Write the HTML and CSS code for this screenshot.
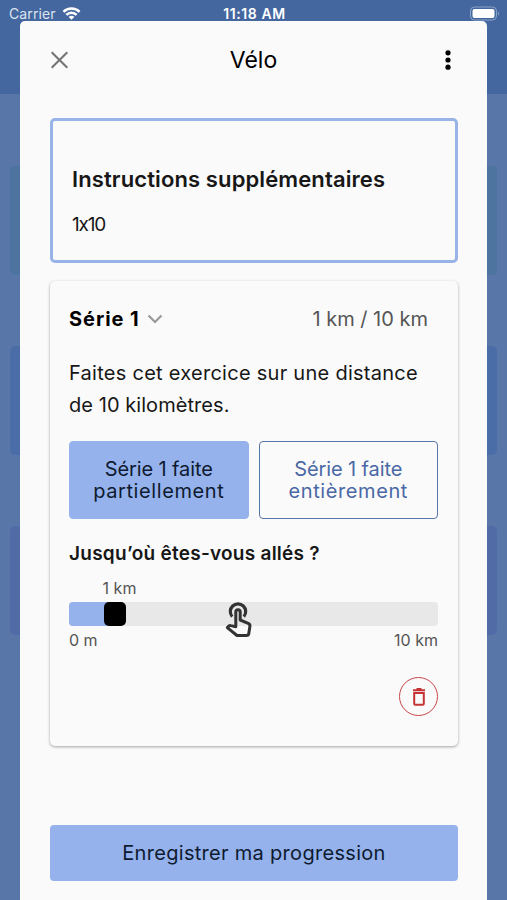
FILE: index.html
```html
<!DOCTYPE html>
<html lang="fr">
<head>
    <meta charset="UTF-8">
    <meta name="viewport" content="width=device-width, initial-scale=1.0">
    <title>Vélo</title>
    <link rel="stylesheet" href="styles.css">
</head>
<body>

<div class="app-background">
    <div class="app-bar"></div>
    <div class="app-list">
        <div class="app-item teal"></div>
        <div class="app-item blue"></div>
        <div class="app-item indigo"></div>
    </div>
</div>

<div class="status-bar">
    <div class="carrier">
        <span>Carrier</span>
        <svg width="19" height="15" viewBox="0 0 20 15" fill="none" stroke="#fff" stroke-width="2.7">
            <path d="M1.5 5.7a12 12 0 0 1 17 0"/>
            <path d="M4.6 9a7.6 7.6 0 0 1 10.8 0"/>
            <path d="M10 14.2l-3-3a4.2 4.2 0 0 1 6 0z" fill="#fff" stroke="none"/>
        </svg>
    </div>
    <span class="time">11:18 AM</span>
    <svg class="battery" width="31" height="15" viewBox="0 0 31 15">
        <rect x="1.5" y="1" width="26" height="13" rx="4" fill="none" stroke="#8ba4c9"/>
        <rect x="3.5" y="3" width="22" height="9" rx="2" fill="#fff"/>
        <path d="M29 5.2q2 2.3 0 4.6z" fill="#8ba4c9"/>
    </svg>
</div>

<main class="modal">
    <header class="modal-header">
        <svg width="19" height="20" viewBox="0 0 19 20" fill="none" stroke="#757575" stroke-width="2.1">
            <path d="M1.7 2.2l15.6 15.6M17.3 2.2L1.7 17.8"/>
        </svg>
        <h1>Vélo</h1>
        <svg width="20" height="20" viewBox="0 0 20 20">
            <circle cx="10" cy="2.8" r="2.6"/>
            <circle cx="10" cy="10" r="2.6"/>
            <circle cx="10" cy="17.2" r="2.6"/>
        </svg>
    </header>

    <section class="instructions">
        <h2>Instructions supplémentaires</h2>
        <p>1x10</p>
    </section>

    <section class="serie">
        <div class="serie-header">
            <h3>Série 1</h3>
            <svg width="16" height="10" viewBox="0 0 16 10" fill="none" stroke="#999" stroke-width="2.2">
                <path d="M1.5 1.5L8 8l6.5-6.5"/>
            </svg>
            <span class="distance">1 km / 10 km</span>
        </div>
        <p class="description"><span class="line-one">Faites cet exercice sur une distance</span><br>de 10 kilomètres.</p>
        <div class="choices">
            <button class="choice selected"><span class="line-one">Série 1 faite</span><br>partiellement</button>
            <button class="choice"><span class="line-one">Série 1 faite</span><br>entièrement</button>
        </div>
        <h4>Jusqu’où êtes-vous allés ?</h4>
        <div class="slider">
            <div class="slider-value">1 km</div>
            <div class="track">
                <div class="fill"></div>
                <div class="thumb"></div>
                <svg class="hand" width="28" height="36" viewBox="0 0 28 36" fill="none" stroke="#333" stroke-width="3" stroke-linejoin="round">
                    <path d="M7.2 14.6A7.7 7.7 0 1 1 18.8 14.6" stroke-width="3.2"/>
                    <path d="M10.8 10a2.2 2.2 0 0 1 4.4 0v8l8 3.3q2 .9 1.7 3l-1.1 7.2q-.3 2-2.4 2H12L2.3 25.6l1.5-1.5q.8-.8 2-.5l5 1.1z"/>
                </svg>
            </div>
            <div class="slider-limits"><span>0 m</span><span>10 km</span></div>
        </div>
        <button class="delete" aria-label="Supprimer">
            <svg width="14" height="18" viewBox="0 0 14 18" fill="none" stroke="#c53336" stroke-width="2">
                <path d="M1 2.3h12M4.5 1h5"/>
                <path d="M2.2 5h9.6v10.8q0 1-1 1H3.2q-1 0-1-1z"/>
            </svg>
        </button>
    </section>

    <button class="save">Enregistrer ma progression</button>
</main>

</body>
</html>
```
FILE: styles.css
```css
* {
    box-sizing: border-box;
}

body {
    position: relative;
    height: 900px;
    margin: 0;
    overflow: hidden;
    font-family: Inter, "Liberation Sans", sans-serif;
    color: #171717;
    background-color: #5976a9;
}

h1, h2, h3, h4, p {
    margin: 0;
}

button {
    font-family: inherit;
    padding: 0;
    border: none;
    border-radius: 4px;
    cursor: pointer;
}

.app-bar {
    height: 94px;
    background-color: #44679f;
}

.app-list {
    display: flex;
    flex-direction: column;
    gap: 71px;
    padding: 72px 10px 0;
}

.app-item {
    height: 109px;
    border-radius: 5px;
}

.app-item.teal {
    background-color: #4d739f;
}

.app-item.blue {
    background-color: #4a6da7;
}

.app-item.indigo {
    background-color: #506ba5;
}

/* Barre de statut */
.status-bar {
    position: absolute;
    top: 0;
    left: 0;
    display: grid;
    grid-template-columns: 1fr auto 1fr;
    width: 100%;
    height: 27px;
    padding: 0 7px 0 9px;
    align-items: center;
    color: white;
    font-size: 14px;
}

.carrier {
    display: flex;
    align-items: center;
    gap: 6px;
    color: #dce4f0;
    letter-spacing: 0.1px;
}

.time {
    font-size: 14px;
    font-weight: 600;
    letter-spacing: 0.6px;
}

.battery {
    justify-self: end;
}

/* Fenêtre */
.modal {
    position: absolute;
    top: 21px;
    left: 20px;
    width: 467px;
    height: 879px;
    padding: 0 29px 0 30px;
    border-radius: 5px 5px 0 0;
    background-color: #fafafa;
}

.modal-header {
    display: flex;
    justify-content: space-between;
    align-items: center;
    height: 77px;
}

.modal-header h1 {
    font-size: 23px;
    font-weight: 400;
    color: #000;
}

.instructions {
    height: 145px;
    margin-top: 20px;
    padding: 44px 19px 0;
    border: 3px solid #98b3e8;
    border-radius: 5px;
}

.instructions h2 {
    font-size: 22px;
    line-height: 28px;
    font-weight: 600;
    letter-spacing: 0.11px;
}

.instructions p {
    margin-top: 18px;
    font-size: 19px;
    line-height: 28px;
    letter-spacing: -1.2px;
    font-feature-settings: "calt" 0;
}

.serie {
    display: flex;
    flex-direction: column;
    height: 465px;
    margin-top: 18px;
    padding: 24px 20px 0 19px;
    border-radius: 5px;
    box-shadow: 0 1px 3px rgba(0, 0, 0, 0.35);
}

.serie-header {
    display: flex;
    align-items: center;
    height: 28px;
}

.serie-header h3 {
    margin-right: 7px;
    font-size: 20px;
    font-weight: 700;
    letter-spacing: 0.95px;
    color: #000;
}

.distance {
    margin-left: auto;
    margin-right: 10px;
    font-size: 20px;
    color: #555;
}

.description {
    margin-top: 24px;
    font-size: 20px;
    line-height: 32px;
    letter-spacing: 0.06px;
    white-space: nowrap;
}

.description .line-one {
    letter-spacing: 0.27px;
}

.choices {
    display: grid;
    grid-template-columns: 1fr 1fr;
    gap: 10px;
    margin-top: 20px;
}

.choice {
    height: 78px;
    font-size: 20px;
    line-height: 22px;
    letter-spacing: 0.6px;
    color: #4a68a5;
    background-color: #fafafa;
    border: 1.5px solid #5875aa;
}

.choice .line-one {
    letter-spacing: -0.1px;
}

.choice.selected {
    color: #0e1a30;
    background-color: #95b2ec;
    border-color: #95b2ec;
}

.serie h4 {
    margin-top: 22px;
    font-size: 19px;
    line-height: 26px;
    font-weight: 600;
    letter-spacing: 0.25px;
}

.slider {
    font-size: 16px;
    line-height: 20px;
    color: #555;
}

.slider-value {
    width: 101px;
    margin-top: 11px;
    text-align: center;
}

.track {
    position: relative;
    display: flex;
    height: 24px;
    margin-top: 4px;
    border-radius: 4px;
    background-color: #e8e8e8;
}

.fill {
    width: 39px;
    margin-right: -4px;
    border-radius: 4px 0 0 4px;
    background-color: #95b2ec;
}

.thumb {
    width: 22px;
    border-radius: 5px;
    background-color: #000;
}

.hand {
    position: absolute;
    top: 0;
    left: 156px;
}

.slider-limits {
    display: flex;
    justify-content: space-between;
    margin-top: 4px;
}

.delete {
    display: flex;
    justify-content: center;
    align-items: center;
    align-self: flex-end;
    width: 39px;
    height: 39px;
    margin-top: 27px;
    border: 1.5px solid #c9474a;
    border-radius: 50%;
    background-color: transparent;
}

.save {
    width: 100%;
    height: 56px;
    margin-top: 79px;
    font-size: 20px;
    letter-spacing: 0.3px;
    color: #0e1a30;
    background-color: #95b2ec;
}
```
